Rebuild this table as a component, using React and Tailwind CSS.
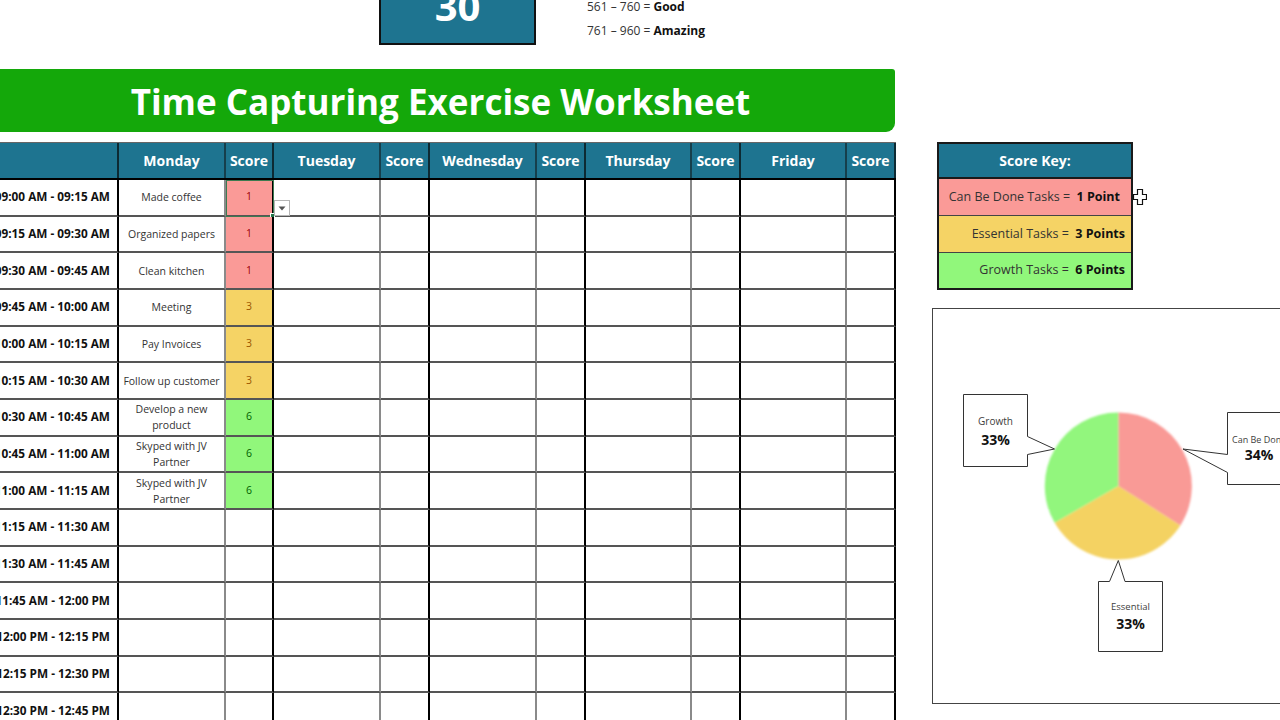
import React from "react";

const times = [
  "09:00 AM - 09:15 AM",
  "09:15 AM - 09:30 AM",
  "09:30 AM - 09:45 AM",
  "09:45 AM - 10:00 AM",
  "10:00 AM - 10:15 AM",
  "10:15 AM - 10:30 AM",
  "10:30 AM - 10:45 AM",
  "10:45 AM - 11:00 AM",
  "11:00 AM - 11:15 AM",
  "11:15 AM - 11:30 AM",
  "11:30 AM - 11:45 AM",
  "11:45 AM - 12:00 PM",
  "12:00 PM - 12:15 PM",
  "12:15 PM - 12:30 PM",
  "12:30 PM - 12:45 PM",
];

const tasks = [
  ["Made coffee", 1],
  ["Organized papers", 1],
  ["Clean kitchen", 1],
  ["Meeting", 3],
  ["Pay Invoices", 3],
  ["Follow up customer", 3],
  ["Develop a new product", 6],
  ["Skyped with JV Partner", 6],
  ["Skyped with JV Partner", 6],
];

const scoreStyle = {
  1: "bg-[#fa9a97] text-[#9c0006]",
  3: "bg-[#f5d365] text-[#9c5700]",
  6: "bg-[#91f77b] text-[#006100]",
};

const days = [
  ["Monday", "w-[107px]", "w-[48px]"],
  ["Tuesday", "w-[107px]", "w-[49px]"],
  ["Wednesday", "w-[107px]", "w-[49px]"],
  ["Thursday", "w-[106px]", "w-[49px]"],
  ["Friday", "w-[106px]", "w-[49px]"],
];

function Header() {
  return (
    <div className="flex h-[38px] border-t border-[#666] border-b-2 border-b-black bg-[#1e7490] text-white font-bold text-[14px]">
      <div className="w-[119px] shrink-0 border-r-2 border-[#0d2a33]" />
      {days.map(([d, dw, sw]) => (
        <React.Fragment key={d}>
          <div className={`${dw} shrink-0 border-r-2 border-[#163f4c] flex items-center justify-center`}>{d}</div>
          <div className={`${sw} shrink-0 border-r-2 border-[#0d2a33] flex items-center justify-center`}>Score</div>
        </React.Fragment>
      ))}
    </div>
  );
}

function Row({ i }) {
  const t = tasks[i];
  return (
    <div className="flex h-[36.67px]">
      <div className="w-[119px] shrink-0 border-r-2 border-black border-b-2 border-b-[#555] flex items-center justify-end pr-[7px] whitespace-nowrap font-bold text-[11.8px] text-[#111]">
        {times[i]}
      </div>
      {days.map(([d, dw, sw], di) => {
        const has = di === 0 && t;
        return (
          <React.Fragment key={d}>
            <div className={`${dw} shrink-0 border-r-2 border-[#8a8a8a] border-b-2 border-b-[#555] flex items-center justify-center text-center px-[4px] text-[10.5px] leading-[16px] text-[#333]`}>
              {has ? t[0] : ""}
            </div>
            <div
              className={`${sw} shrink-0 border-r-2 border-black border-b-2 border-b-[#555] flex items-center justify-center text-[10.5px] ${has ? scoreStyle[t[1]] : ""} relative`}
            >
              {has ? t[1] : ""}
              {di === 0 && i === 0 && (
                <>
                  <div className="absolute left-0 top-0 w-[48px] h-[37px] border border-[#3d7a50]" />
                  <div className="absolute left-[44px] top-[33px] w-[5px] h-[5px] bg-[#217346] border border-white" />
                  <div className="absolute left-[48px] top-[20px] w-[16px] h-[16px] bg-white border border-[#b5b5b5] flex items-center justify-center z-10">
                    <svg width="8" height="5" viewBox="0 0 8 5"><path d="M0.5 0.5 L7.5 0.5 L4 4.5 Z" fill="#555" /></svg>
                  </div>
                </>
              )}
            </div>
          </React.Fragment>
        );
      })}
    </div>
  );
}

function ScoreKey() {
  return (
    <div className="w-[196px] border-2 border-[#1a1a1a] ml-[5px] text-[12.5px] text-[#333]">
      <div className="h-[35px] bg-[#1e7490] border-b-2 border-[#1a1a1a] flex items-center justify-center text-white font-bold text-[14px]">
        Score Key:
      </div>
      <div className="h-[37px] bg-[#fa9a97] border-b border-[#444] flex items-center justify-end pr-[11px] whitespace-nowrap">
        Can Be Done Tasks =&nbsp;&nbsp;<span className="font-bold text-[#111]">1 Point</span>
      </div>
      <div className="h-[37px] bg-[#f5d365] border-b border-[#444] flex items-center justify-end pr-[6px] whitespace-nowrap">
        Essential Tasks =&nbsp;&nbsp;<span className="font-bold text-[#111]">3 Points</span>
      </div>
      <div className="h-[35px] bg-[#91f77b] flex items-center justify-end pr-[6px] whitespace-nowrap">
        Growth Tasks =&nbsp;&nbsp;<span className="font-bold text-[#111]">6 Points</span>
      </div>
    </div>
  );
}

function Chart() {
  const cx = 185.3, cy = 177, r = 73.5;
  const pt = (deg) => {
    const a = (deg * Math.PI) / 180;
    return [cx + r * Math.sin(a), cy - r * Math.cos(a)];
  };
  const [p1x, p1y] = pt(122.4);
  const [p2x, p2y] = pt(240);
  const font = "'Open Sans', sans-serif";
  return (
    <div className="mt-[18px] w-[360px] h-[396px] border border-[#444] bg-white">
      <svg width="358" height="394" viewBox="0 0 358 394">
        <defs>
          <filter id="soft" x="-10%" y="-10%" width="120%" height="120%">
            <feGaussianBlur stdDeviation="0.8" />
          </filter>
        </defs>
        <g filter="url(#soft)">
          <path d={`M${cx} ${cy} L${cx} ${cy - r} A${r} ${r} 0 0 1 ${p1x} ${p1y} Z`} fill="#f99a96" />
          <path d={`M${cx} ${cy} L${p1x} ${p1y} A${r} ${r} 0 0 1 ${p2x} ${p2y} Z`} fill="#f4d262" />
          <path d={`M${cx} ${cy} L${p2x} ${p2y} A${r} ${r} 0 0 1 ${cx} ${cy - r} Z`} fill="#92f67d" />
        </g>
        <polygon points="30.5,85.5 94.5,85.5 94.5,127.5 121.5,140 94.5,145.5 94.5,157.5 30.5,157.5" fill="white" stroke="#333" strokeWidth="1" />
        <text x="62.5" y="115.5" textAnchor="middle" fontFamily={font} fontSize="10" fill="#404040">Growth</text>
        <text x="62.5" y="135.5" textAnchor="middle" fontFamily={font} fontSize="14" fontWeight="700" fill="#111">33%</text>
        <polygon points="294.5,103.5 362,103.5 362,175.5 294.5,175.5 294.5,163.5 250,140 294.5,145.5" fill="white" stroke="#333" strokeWidth="1" />
        <text x="299" y="133.5" fontFamily={font} fontSize="9" fill="#404040">Can Be Done</text>
        <text x="326" y="151" textAnchor="middle" fontFamily={font} fontSize="14" fontWeight="700" fill="#111">34%</text>
        <polygon points="165.5,272.5 176.5,272.5 185.3,251.5 192,272.5 229.5,272.5 229.5,342.5 165.5,342.5" fill="white" stroke="#333" strokeWidth="1" />
        <text x="197.5" y="300.5" textAnchor="middle" fontFamily={font} fontSize="9.5" fill="#404040">Essential</text>
        <text x="197.5" y="319.5" textAnchor="middle" fontFamily={font} fontSize="14" fontWeight="700" fill="#111">33%</text>
      </svg>
    </div>
  );
}

export default function App() {
  return (
    <div className="w-[1280px] h-[720px] overflow-hidden bg-white relative flex" style={{ fontFamily: "'Open Sans', 'Noto Sans', sans-serif" }}>
      <div className="w-[896px] shrink-0">
        <div className="h-[69px] flex items-start">
          <div className="ml-[379px] w-[157px] h-[45px] bg-[#1e7490] border-x-2 border-b-2 border-[#111] flex justify-center overflow-hidden">
            <span className="text-white font-bold text-[40px] leading-[40px] -mt-[14px]">30</span>
          </div>
          <div className="ml-[51px] -mt-[5px] text-[12px] leading-[24px] text-[#333] whitespace-nowrap">
            <div>561 – 760 = <span className="font-bold text-[#111]">Good</span></div>
            <div>761 – 960 = <span className="font-bold text-[#111]">Amazing</span></div>
          </div>
        </div>
        <div className="w-[895px] h-[63px] bg-[#14a80a] rounded-br-[9px] rounded-tr-[3px] flex items-center justify-center pr-[14px] pt-[3px]">
          <span className="text-white font-bold text-[35px]">Time Capturing Exercise Worksheet</span>
        </div>
        <div className="mt-[10px]">
          <Header />
          {times.map((_, i) => (
            <Row key={i} i={i} />
          ))}
        </div>
      </div>
      <div className="ml-[36px] pt-[142px]">
        <div className="flex items-start">
          <ScoreKey />
          <svg className="ml-[0px] mt-[47px]" width="14" height="16" viewBox="0 0 14 16">
            <path d="M4.5 0.5 H9.5 V5.5 H13.5 V10.5 H9.5 V15.5 H4.5 V10.5 H0.5 V5.5 H4.5 Z" fill="white" stroke="#111" strokeWidth="1.2" />
          </svg>
        </div>
        <Chart />
      </div>
    </div>
  );
}
